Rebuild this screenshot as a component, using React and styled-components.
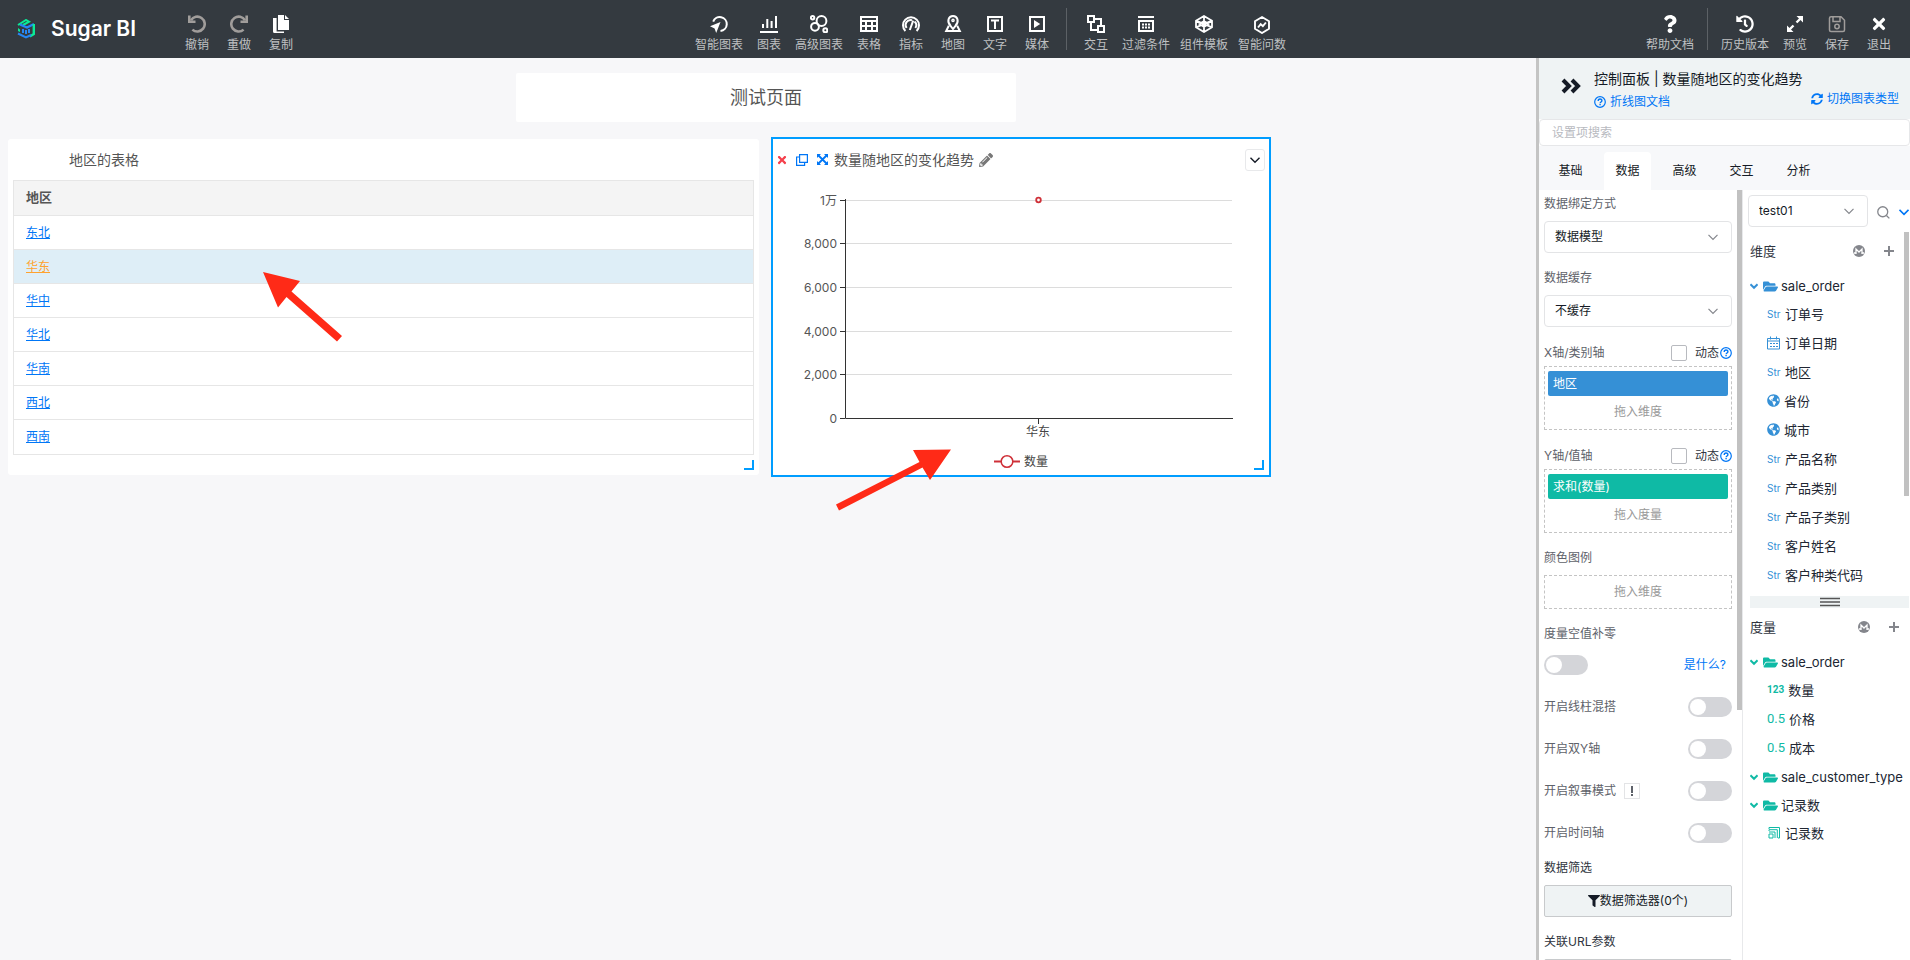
import React from 'react';
import styled, { createGlobalStyle } from 'styled-components';
import { FaQuestion, FaTimes, FaFolderOpen, FaFilter, FaPencilAlt, FaSyncAlt, FaGlobeAmericas, FaHistory } from 'react-icons/fa';

const GlobalStyle = createGlobalStyle`
  *, *::before, *::after { box-sizing: border-box; }
  body { margin: 0; background: #f7f7f9; color: #151b26; font: 12px/20px Inter, "Noto Sans CJK SC", sans-serif; }
  button, input, select { font: inherit; color: inherit; }
  button { cursor: pointer; }
  svg { display: block; flex: none; }
`;

const Page = styled.div`
  display: flex;
  flex-direction: column;
  height: 100vh;
  overflow: hidden;
`;
const Toolbar = styled.header`
  display: flex;
  flex: none;
  height: 58px;
  padding-right: 10px;
  background: #343a40;
`;
const Brand = styled.div`
  display: flex;
  align-items: center;
  gap: 16px;
  width: 176px;
  padding-left: 17px;
  color: #fff;
  font-size: 21px;
  font-weight: 600;
`;
const ToolGroup = styled.nav`
  display: flex;
  margin-left: ${(p) => (p.$push ? 'auto' : '0')};
  padding-right: ${(p) => (p.$gap ? '38px' : '0')};
`;
const ToolButton = styled.button`
  display: flex;
  flex-direction: column;
  align-items: center;
  gap: 3px;
  min-width: 42px;
  padding: 14px 5px 0;
  border: 0;
  background: none;
  color: ${(p) => (p.$dim ? '#a09d9b' : '#fff')};
`;
const ToolIcon = styled.span`
  display: grid;
  place-items: center;
  height: 20px;
`;
const ToolLabel = styled.span`
  color: #bfc0c2;
  font-size: 12px;
  line-height: 16px;
  white-space: nowrap;
`;
const ToolDivider = styled.span`
  width: 1px;
  margin: 8px 8px;
  background: #5c6166;
`;
const Body = styled.div`
  display: flex;
  flex: 1;
  min-height: 0;
`;
const Canvas = styled.main`
  position: relative;
  flex: 1;
  min-width: 0;
  padding: 15px 8px;
`;
const TitleRow = styled.div`
  display: grid;
  grid-template-columns: 508fr 500fr 512fr;
  margin-bottom: 17px;
`;
const PageTitle = styled.h1`
  grid-column: 2;
  margin: 0;
  border-radius: 2px;
  background: #fff;
  color: #555;
  font-size: 18px;
  font-weight: 400;
  line-height: 49px;
  text-align: center;
`;
const WidgetRow = styled.div`
  display: grid;
  grid-template-columns: 751fr 496fr 245fr;
  gap: 14px;
`;
const Widget = styled.section`
  position: relative;
  min-height: 336px;
  border-radius: ${(p) => (p.$selected ? '0' : '3px')};
  background: #fff;
  outline: ${(p) => (p.$selected ? '2px solid #009dff' : 'none')};
`;
const WidgetHead = styled.div`
  display: flex;
  align-items: center;
  height: 41px;
  padding-left: ${(p) => (p.$selected ? '4px' : '61px')};
`;
const WidgetTitle = styled.h2`
  margin: 0 2px 0 0;
  color: #555;
  font-size: 14px;
  font-weight: 400;
`;
const HeadIcon = styled.button`
  display: grid;
  place-items: center;
  width: 20px;
  height: 20px;
  padding: 0;
  border: 0;
  background: none;
  color: ${(p) => p.$color};
`;
const HeadIcons = styled.div`
  display: flex;
  margin: 0 2px 0 -5px;
`;
const MoreButton = styled.button`
  display: grid;
  place-items: center;
  width: 20px;
  height: 22px;
  margin: 0 4px 0 auto;
  padding: 0;
  border: 1px solid #e8e9eb;
  border-radius: 3px;
  background: #fff;
`;
const ResizeHandle = styled.span`
  position: absolute;
  right: 5px;
  bottom: 5px;
  width: 10px;
  height: 10px;
  border: solid #009dff;
  border-width: 0 2px 2px 0;
`;
const DataTable = styled.table`
  width: calc(100% - 10px);
  margin: 0 5px;
  border: 1px solid #e6e6e6;
  border-collapse: collapse;
  text-align: left;
  th, td { padding: 0 12px; border-bottom: 1px solid #e6e6e6; }
  th { height: 35px; padding-bottom: 2px; background: #f4f4f4; color: #555; font-size: 13px; font-weight: 600; }
  td { height: 34px; }
  tr:last-child td { height: 35px; }
`;
const Row = styled.tr`
  background: ${(p) => (p.$active ? '#deeef7' : '#fff')};
`;
const RegionLink = styled.a`
  color: ${(p) => (p.$active ? '#ffa22e' : '#0076f6')};
  text-decoration: underline;
`;
const ChartSvg = styled.svg`
  width: 100%;
  height: auto;
  font-size: 12px;
`;
const Annotations = styled.svg`
  position: absolute;
  top: 0;
  left: 0;
  pointer-events: none;
`;

const Sidebar = styled.aside`
  display: flex;
  flex: none;
  flex-direction: column;
  width: 374px;
  border-left: 3px solid #c4c4c4;
  background: #fff;
  overflow: hidden;
`;
const PanelHead = styled.div`
  display: flex;
  flex: none;
  height: 61px;
  padding: 10px 11px 0 22px;
  background: #eff3f4;
`;
const CollapseButton = styled.button`
  display: block;
  height: 36px;
  padding: 0;
  border: 0;
  background: none;
`;
const PanelTitles = styled.div`
  flex: 1;
  padding-left: 13px;
`;
const PanelTitle = styled.h2`
  margin: 0 0 5px;
  font-size: 14px;
  font-weight: 400;
  line-height: 22px;
  height: 20px;
  white-space: nowrap;
`;
const TitleWrap = styled.div`
  display: flex;
  line-height: 18px;
`;
const TextLink = styled.a`
  display: inline-flex;
  align-items: center;
  gap: 4px;
  color: #0076f6;
  text-decoration: none;
  white-space: nowrap;
`;
const LinkColumn = styled.div`
  display: flex;
  flex-direction: column;
  padding-top: 21px;
`;
const SearchBox = styled.input`
  flex: none;
  height: 27px;
  padding: 0 12px;
  border: 1px solid #e6e7e9;
  border-radius: 4px;
  background: #fff;
  &::placeholder { color: #b8babf; }
`;
const Tabs = styled.div`
  display: flex;
  flex: none;
  gap: 10px;
  height: 44px;
  padding: 6px 9px 0 8px;
  background: #f7f8fa;
`;
const Tab = styled.button`
  width: 47px;
  padding: 0;
  border: 0;
  border-radius: 4px 4px 0 0;
  background: ${(p) => (p.$active ? '#fff' : 'transparent')};
`;
const Columns = styled.div`
  display: flex;
  flex: 1;
  min-height: 0;
`;
const Settings = styled.div`
  width: 198px;
  padding: 4px 5px 0;
  overflow: hidden;
`;
const Rail = styled.div`
  flex: none;
  width: 5px;
  &::before { content: ''; display: block; height: ${(p) => p.$thumb}; background: #c1c1c1; }
`;
const Field = styled.div`
  margin-bottom: 15px;
`;
const FieldLabel = styled.label`
  display: block;
  margin-bottom: 7px;
  color: ${(p) => (p.$strong ? '#303540' : '#5e626a')};
`;
const SelectWrap = styled.div`
  position: relative;
  width: ${(p) => p.$width || '100%'};
  svg { position: absolute; top: 11px; right: 14px; pointer-events: none; }
`;
const Select = styled.select`
  appearance: none;
  display: block;
  width: 100%;
  height: 32px;
  padding: 0 10px;
  border: 1px solid #e3e4e6;
  border-radius: 4px;
  background: #fff;
`;
const AxisHead = styled.div`
  display: flex;
  align-items: center;
  height: 22px;
  margin-bottom: 2px;
  color: #5e626a;
`;
const CheckLabel = styled.label`
  display: flex;
  align-items: center;
  gap: 8px;
  margin-left: auto;
  margin-right: 1px;
  color: #303540;
`;
const Checkbox = styled.input`
  appearance: none;
  width: 16px;
  height: 16px;
  margin: 0;
  border: 1px solid #b8babf;
  border-radius: 2px;
`;
const DropZone = styled.div`
  padding: ${(p) => (p.$filled ? '4px 3px 1px' : '0 3px')};
  border: 1px dashed #c4c4c4;
  color: #999;
  line-height: 32px;
  text-align: center;
`;
const Chip = styled.div`
  height: 25px;
  padding-left: 5px;
  border-radius: 2px;
  background: ${(p) => p.$color};
  color: #fff;
  line-height: 25px;
  text-align: left;
`;
const SwitchRow = styled.div`
  display: flex;
  align-items: center;
  justify-content: space-between;
  height: ${(p) => (p.$compact ? '28px' : '42px')};
  padding-right: ${(p) => (p.$compact ? '6px' : '0')};
  margin-bottom: ${(p) => (p.$compact ? '7px' : '0')};
  color: #5e626a;
`;
const SwitchText = styled.label`
  display: flex;
  align-items: center;
  gap: 8px;
`;
const Switch = styled.input`
  appearance: none;
  width: 44px;
  height: 20px;
  margin: 0;
  padding: 2px;
  border-radius: 10px;
  background: #d4d5d9;
  &::before { content: ''; display: block; width: 16px; height: 16px; border-radius: 50%; background: #fff; }
`;
const SwitchList = styled.div`
  margin-bottom: 4px;
`;
const Notice = styled.span`
  display: grid;
  place-items: center;
  width: 16px;
  height: 16px;
  border: 1px solid #e3e4e6;
`;
const WideButton = styled.button`
  display: flex;
  align-items: center;
  justify-content: center;
  width: 100%;
  height: 32px;
  border: 1px solid #c8cacc;
  border-radius: 2px;
  background: #eff3f4;
`;
const ModelPane = styled.div`
  display: flex;
  flex: 1;
  flex-direction: column;
  min-width: 0;
  padding-right: 1px;
  border-left: 1px solid #e8e9eb;
`;
const ModelBar = styled.div`
  display: flex;
  align-items: center;
  height: 42px;
  padding-left: 5px;
`;
const BarIcon = styled.button`
  display: block;
  margin-left: ${(p) => (p.$wide ? '9px' : '9px')};
  padding: 2px 0 0;
  border: 0;
  background: none;
  color: ${(p) => p.$color};
`;
const Section = styled.section`
  display: flex;
  height: ${(p) => p.$height || 'auto'};
`;
const SectionMain = styled.div`
  flex: 1;
  min-width: 0;
`;
const SectionHead = styled.div`
  display: flex;
  align-items: center;
  gap: 19px;
  height: 40px;
  padding: 0 10px 2px 7px;
  color: #84868c;
`;
const SectionTitle = styled.h3`
  flex: 1;
  margin: 0;
  color: #303540;
  font-size: 13px;
  font-weight: 400;
`;
const IconButton = styled.button`
  padding: 0;
  border: 0;
  background: none;
  color: inherit;
`;
const Tree = styled.ul`
  margin: 0;
  padding: 0;
  list-style: none;
  color: #202632;
  font-size: 13px;
  white-space: nowrap;
`;
const Folder = styled.li`
  display: flex;
  align-items: center;
  height: 28px;
  padding-left: 7px;
  svg { margin-right: 5px; color: ${(p) => p.$color}; }
  svg + svg { margin-right: 3px; }
`;
const Leaf = styled.li`
  display: flex;
  align-items: center;
  gap: 4px;
  height: 29px;
  padding: 0 0 2px 24px;
`;
const TypeTag = styled.span`
  min-width: 14px;
  color: ${(p) => p.$color};
  font-family: ${(p) => p.$face}, sans-serif;
  font-size: ${(p) => p.$size};
  font-weight: ${(p) => (p.$bold ? 700 : 400)};
`;
const TagIcon = styled.span`
  color: ${(p) => p.$color};
`;
const Splitter = styled.div`
  display: grid;
  place-items: center;
  flex: none;
  height: 12px;
  margin-left: 7px;
  background: #eff3f4;
`;

const BLUE = '#3590d6';
const GREEN = '#0fbaa5';

const Line = ({ size = 18, w = 2, color = 'currentColor', children, box = 18 }) => (
  <svg width={size} height={size} viewBox={`0 0 ${box} ${box}`} fill="none" stroke={color} strokeWidth={w}>{children}</svg>
);

const Chevron = ({ size = 10, color = '#84868c', w = 1.2 }) => (
  <svg width={size} height={size} viewBox="0 0 10 10" fill="none" stroke={color} strokeWidth={w}><path d="M.5 2.8 5 7.3 9.5 2.8" /></svg>
);

const HelpMark = () => (
  <svg width="12" height="12" viewBox="0 0 12 12" fill="none" stroke="#0076f6" strokeWidth="1.2">
    <circle cx="6" cy="6" r="5.3" /><path d="M4.2 4.9c0-2.5 3.7-2.5 3.7-.2C7.9 6 6.1 6 6.1 7.3M6.1 8.1v1.2" strokeWidth="1.4" />
  </svg>
);

const icons = {
  undo: <Line w={2.6}><path d="M3 5.2A7.4 7.4 0 1 1 4.4 14.6" /><path d="M1.3.5v6.2h6.2" /></Line>,
  redo: <Line w={2.6}><path d="M15 5.2A7.4 7.4 0 1 0 13.6 14.6" /><path d="M16.7.5v6.2h-6.2" /></Line>,
  copy: <svg width="18" height="20" viewBox="0 0 18 20" fill="currentColor"><path d="M6 1h6v5h5v10H6z" /><path d="M13 1v4h4z" /><path d="M1 4h3.6v13.4H12V19H2.5Q1 19 1 17.5z" /></svg>,
  smart: <Line w={2}><path d="M3.2 6.6A7 7 0 1 1 10.5 16" /><path d="M0 11.3 10.500 7 6.200 18 4.600 13.400z" fill="currentColor" stroke="none" /></Line>,
  bars: <Line w={2}><path d="M0 17h18M3 13V9M7.3 13V4M11.6 13V6M16 13V1" /></Line>,
  bubbles: <Line w={2}><circle cx="11.5" cy="6" r="4.9" /><circle cx="5" cy="11.8" r="3.9" /><circle cx="2.6" cy="2.8" r="1.7" /><circle cx="15.3" cy="15.3" r="2" /></Line>,
  table: <Line w={2}><path d="M1 2h16v14H1zM1 6h16M1 11h16M6 6v10M12 6v10" /></Line>,
  gauge: <Line w={2}><path d="M3.4 16A8 8 0 1 1 14.6 16" /><path d="M4.600 13A5 5 0 0 1 10 5.200M13.400 13A5 5 0 0 0 12.500 6.500M7.800 15l3.400-9.400" /></Line>,
  map: <Line w={2}><path d="M6.5 10.8C2.5 6.5 4.5 1 9 1s6.5 5.5 2.5 9.8L9 14z" /><circle cx="9" cy="5.4" r="1.1" strokeWidth="1.4" /><path d="M4.8 10.8 2.2 16h13.6l-2.6-5.2" /></Line>,
  text: <Line w={2}><path d="M2 2h14v14H2zM5 5.5h8M9 5v9" /></Line>,
  media: <Line w={2}><path d="M2 2h14v14H2z" /><path d="m6 5 6.2 4L6 13z" fill="currentColor" stroke="none" /></Line>,
  interact: <Line w={2}><path d="M1 1h6v6H1zM11 11h6v6h-6zM7 4h7v7M4 7v8h7" /></Line>,
  filter: <Line w={2}><path d="M1 2h16M2 6h14v10H2z" /><path d="M5 9.5h8M5 12.5h8" strokeDasharray="2 1" /></Line>,
  template: <Line w={1.8}><path d="m9 1 8 4.7v6.6L9 17l-8-4.7V5.7zM9 1v5M9 12v5M1 5.7l16 6.6M17 5.7 1 12.3M9 6l4.5 3L9 12 4.5 9z" /></Line>,
  ask: <svg width="18" height="20" viewBox="0 0 18 20" fill="none" stroke="currentColor" strokeWidth="1.9"><path d="m9 3 7 4.2v7.6L9 19l-7-4.2V7.2zM5 13.5l2.7-3.3 2.2 2 3-3.7" /></svg>,
  help: <FaQuestion size={18} />,
  history: <FaHistory size={18} />,
  preview: <Line w={2.4}><path d="m10.5 7.5 5-5M7.5 10.5l-5 5" /><path d="M10.5 1H17v6.5zM1 10.5V17h6.5z" fill="currentColor" stroke="none" /></Line>,
  save: <Line w={1.5}><path d="M3 1.8h10l3.5 3.5v9.6q0 1.5-1.5 1.5H3q-1.5 0-1.5-1.5V3.300Q1.500 1.800 3 1.800zM5 2v4.500h7V2" /><circle cx="9" cy="11.500" r="2.200" /></Line>,
  exit: <FaTimes size={18} />,
};

const Tool = ({ icon, label, dim }) => (
  <ToolButton type="button" $dim={dim}>
    <ToolIcon>{icons[icon]}</ToolIcon>
    <ToolLabel>{label}</ToolLabel>
  </ToolButton>
);

const Logo = () => (
  <svg width="18" height="20" viewBox="0 0 18 20" fill="none">
    <path d="M1 6 9 1l3 1.700-6 3.300" stroke="#0bea97" strokeWidth="2" />
    <path d="m3 5.500 7 3L17 5" stroke="#2686f5" strokeWidth="2.400" />
    <path d="M16.800 5v10l-4 2.500" stroke="#0bea97" strokeWidth="2.400" />
    <path d="m1 9 2 1.500v2.500L1 12z" fill="#0bea97" />
    <path d="M1 14.500 9 18.500l5-2.500M6 10v4M9 11v4M12 10v4" stroke="#2686f5" strokeWidth="2" />
  </svg>
);

const regions = ['东北', '华东', '华中', '华北', '华南', '西北', '西南'];

const TableWidget = () => (
  <Widget>
    <WidgetHead><WidgetTitle>地区的表格</WidgetTitle></WidgetHead>
    <DataTable>
      <thead><tr><th scope="col">地区</th></tr></thead>
      <tbody>
        {regions.map((r) => (
          <Row key={r} $active={r === '华东'}>
            <td><RegionLink href="#region" $active={r === '华东'}>{r}</RegionLink></td>
          </Row>
        ))}
      </tbody>
    </DataTable>
    <ResizeHandle />
  </Widget>
);

const yTicks = [['1万', 20], ['8,000', 63], ['6,000', 107], ['4,000', 151], ['2,000', 194], ['0', 238]];

const LineChart = () => (
  <ChartSvg viewBox="0 0 496 295" role="img" aria-label="数量随地区的变化趋势">
    {yTicks.map(([label, y]) => (
      <g key={label}>
        {label !== '0' && <path d={`M73 ${y + 0.5}H459`} stroke="#dcdcdc" />}
        <path d={`M67 ${y + 0.5}h5`} stroke="#333" />
        <text x="64" y={y + 5} textAnchor="end" fill="#555">{label}</text>
      </g>
    ))}
    <path d="M72.500 19v219.500H460M265.500 239v5" stroke="#333" fill="none" />
    <circle cx="265.500" cy="20" r="2.300" fill="#fff" stroke="#cf3038" strokeWidth="1.800" />
    <text x="265" y="256" textAnchor="middle" fill="#444">华东</text>
    <path d="M221 281.500h26" stroke="#cf3038" strokeWidth="2" />
    <circle cx="234" cy="281.500" r="5.800" fill="#fff" stroke="#cf3038" strokeWidth="1.500" />
    <text x="251" y="286" fill="#444">数量</text>
  </ChartSvg>
);

const ChartWidget = () => (
  <Widget $selected>
    <WidgetHead $selected>
      <HeadIcons>
        <HeadIcon type="button" $color="#f53f4b" aria-label="删除"><FaTimes size={12} /></HeadIcon>
        <HeadIcon type="button" $color="#0076f6" aria-label="复制">
          <Line size={12} box={12} w={1.2}><path d="M3.600.6h7.800v7.800H3.600zM3 3H.6v8.400h8V9" /></Line>
        </HeadIcon>
        <HeadIcon type="button" $color="#0076f6" aria-label="放大">
          <Line size={11} box={11} w={1.8}><path d="m1 1 9 9M10 1l-9 9" /><path d="M0 0h4L0 4zM11 0v4L7 0zM0 11V7l4 4zM11 11H7l4-4z" fill="currentColor" stroke="none" /></Line>
        </HeadIcon>
      </HeadIcons>
      <WidgetTitle>数量随地区的变化趋势</WidgetTitle>
      <HeadIcon type="button" $color="#777" aria-label="编辑标题"><FaPencilAlt size={14} /></HeadIcon>
      <MoreButton type="button" aria-label="更多"><Chevron color="#151b26" w={1.4} /></MoreButton>
    </WidgetHead>
    <LineChart />
    <ResizeHandle />
  </Widget>
);

const SelectField = ({ id, label, value }) => (
  <Field>
    <FieldLabel htmlFor={id}>{label}</FieldLabel>
    <SelectWrap>
      <Select id={id}><option>{value}</option></Select>
      <Chevron />
    </SelectWrap>
  </Field>
);

const AxisField = ({ label, chip, color, hint }) => (
  <Field>
    <AxisHead>
      {label}
      <CheckLabel><Checkbox type="checkbox" />动态</CheckLabel>
      <HelpMark />
    </AxisHead>
    <DropZone $filled>
      <Chip $color={color}>{chip}</Chip>
      {hint}
    </DropZone>
  </Field>
);

const SwitchField = ({ id, label, notice }) => (
  <SwitchRow>
    <SwitchText htmlFor={id}>{label}{notice && <Notice><svg width="2" height="10" viewBox="0 0 2 10" fill="#5e626a"><path d="M0 0h2v7H0zM0 8h2v2H0z" /></svg></Notice>}</SwitchText>
    <Switch id={id} type="checkbox" role="switch" />
  </SwitchRow>
);

const MMark = () => (
  <svg width="12" height="12" viewBox="0 0 12 12"><circle cx="6" cy="6" r="6" fill="currentColor" /><path d="M3 9V4l3 3 3-3v5M1 8h2M9 8h2" fill="none" stroke="#fff" strokeWidth="1.300" /></svg>
);

const PaneHead = ({ title }) => (
  <SectionHead>
    <SectionTitle>{title}</SectionTitle>
    <IconButton type="button" aria-label="管理"><MMark /></IconButton>
    <IconButton type="button" aria-label="新增"><Line size={10} box={10} w={2}><path d="M5 0v10M0 5h10" /></Line></IconButton>
  </SectionHead>
);

const TreeFolder = ({ color, children }) => (
  <Folder $color={color}>
    <Chevron size={8} color="currentColor" w={2.6} />
    <FaFolderOpen size={15} />
    {children}
  </Folder>
);

const typeIcons = {
  str: <TypeTag $color={BLUE} $size="10px" $face="Inter">Str</TypeTag>,
  date: <TagIcon $color={BLUE}><Line size={14} box={14} w={1}><path d="M.5 2.500h12v10.500H.5zM.5 5h12M3.500.5v3M9.500.5v3" /><path d="M3 7.500h8M3 10.500h8" strokeDasharray="2 1" /></Line></TagIcon>,
  geo: <TagIcon $color={BLUE}><FaGlobeAmericas size={13} /></TagIcon>,
  int: <TypeTag $color={GREEN} $size="10px" $face="Roboto" $bold>123</TypeTag>,
  float: <TypeTag $color={GREEN} $size="13px" $face="Roboto">0.5</TypeTag>,
  count: <TagIcon $color={GREEN}><Line size={14} box={14} w={1}><path d="M2 3V1.500h10.500v10.500H11M2 5V3.700h8.300V12M2 6h6v6M2 8h4v4H2z" /></Line></TagIcon>,
};

const TreeLeaf = ({ type, children }) => <Leaf>{typeIcons[type]}<span>{children}</span></Leaf>;

const dimensions = [
  ['str', '订单号'], ['date', '订单日期'], ['str', '地区'], ['geo', '省份'], ['geo', '城市'],
  ['str', '产品名称'], ['str', '产品类别'], ['str', '产品子类别'], ['str', '客户姓名'], ['str', '客户种类代码'],
];

export default function App() {
  return (
    <Page>
      <GlobalStyle />
      <Toolbar>
        <Brand><Logo />Sugar BI</Brand>
        <ToolGroup $gap>
          <Tool icon="undo" label="撤销" dim />
          <Tool icon="redo" label="重做" dim />
          <Tool icon="copy" label="复制" />
        </ToolGroup>
        <ToolGroup $push>
          <Tool icon="smart" label="智能图表" />
          <Tool icon="bars" label="图表" />
          <Tool icon="bubbles" label="高级图表" />
          <Tool icon="table" label="表格" />
          <Tool icon="gauge" label="指标" />
          <Tool icon="map" label="地图" />
          <Tool icon="text" label="文字" />
          <Tool icon="media" label="媒体" />
          <ToolDivider />
          <Tool icon="interact" label="交互" />
          <Tool icon="filter" label="过滤条件" />
          <Tool icon="template" label="组件模板" />
          <Tool icon="ask" label="智能问数" />
        </ToolGroup>
        <ToolGroup $push>
          <Tool icon="help" label="帮助文档" />
          <ToolDivider />
          <Tool icon="history" label="历史版本" />
          <Tool icon="preview" label="预览" />
          <Tool icon="save" label="保存" dim />
          <Tool icon="exit" label="退出" />
        </ToolGroup>
      </Toolbar>
      <Body>
        <Canvas>
          <TitleRow><PageTitle>测试页面</PageTitle></TitleRow>
          <WidgetRow>
            <TableWidget />
            <ChartWidget />
          </WidgetRow>
          <Annotations width="960" height="460" viewBox="0 0 960 460" fill="#ff2a17">
            <path d="m263 214 37 9-8.500 10.500 50.500 44.500-5 5.500-50.500-44.500-8.500 10.500z" />
            <path d="m951 391.500-38 .5 6.500 12-83.500 42.500 3 6 83.500-43 7.500 12.500z" />
          </Annotations>
        </Canvas>
        <Sidebar>
          <PanelHead>
            <CollapseButton type="button" aria-label="收起">
              <Line size={20} box={20} w={4}><path d="m2 4 6 6-6 6M11 4l6 6-6 6" /></Line>
            </CollapseButton>
            <PanelTitles>
              <PanelTitle>控制面板 | 数量随地区的变化趋势</PanelTitle>
              <TitleWrap>
                <TextLink href="#doc"><HelpMark />折线图文档</TextLink>
              </TitleWrap>
            </PanelTitles>
            <LinkColumn><TextLink href="#type"><FaSyncAlt size={12} />切换图表类型</TextLink></LinkColumn>
          </PanelHead>
          <SearchBox type="text" placeholder="设置项搜索" aria-label="设置项搜索" />
          <Tabs>
            {['基础', '数据', '高级', '交互', '分析'].map((t) => (
              <Tab key={t} type="button" $active={t === '数据'}>{t}</Tab>
            ))}
          </Tabs>
          <Columns>
            <Settings>
              <SelectField id="binding" label="数据绑定方式" value="数据模型" />
              <SelectField id="cache" label="数据缓存" value="不缓存" />
              <AxisField label="X轴/类别轴" chip="地区" color={BLUE} hint="拖入维度" />
              <AxisField label="Y轴/值轴" chip="求和(数量)" color={GREEN} hint="拖入度量" />
              <Field>
                <FieldLabel as="div">颜色图例</FieldLabel>
                <DropZone>拖入维度</DropZone>
              </Field>
              <FieldLabel htmlFor="fill-zero">度量空值补零</FieldLabel>
              <SwitchRow $compact>
                <Switch id="fill-zero" type="checkbox" role="switch" />
                <TextLink href="#what">是什么?</TextLink>
              </SwitchRow>
              <SwitchList>
                <SwitchField id="mix" label="开启线柱混搭" />
                <SwitchField id="dual" label="开启双Y轴" />
                <SwitchField id="story" label="开启叙事模式" notice />
                <SwitchField id="timeline" label="开启时间轴" />
              </SwitchList>
              <Field>
                <FieldLabel as="div" $strong>数据筛选</FieldLabel>
                <WideButton type="button"><FaFilter size={12} />数据筛选器(0个)</WideButton>
              </Field>
              <Field>
                <FieldLabel as="div" $strong>关联URL参数</FieldLabel>
                <WideButton type="button" aria-label="关联URL参数" />
              </Field>
            </Settings>
            <Rail $thumb="67.5%" />
            <ModelPane>
              <ModelBar>
                <SelectWrap $width="123px">
                  <Select aria-label="数据模型"><option>test01</option></Select>
                  <Chevron />
                </SelectWrap>
                <BarIcon type="button" aria-label="搜索" $color="#84868c">
                  <Line size={13} box={12} w={1.2}><circle cx="5.300" cy="5.300" r="4.600" /><path d="m8.700 8.700 2.700 2.700" /></Line>
                </BarIcon>
                <BarIcon type="button" aria-label="展开" $color="#0076f6"><Chevron color="currentColor" w={1.6} /></BarIcon>
              </ModelBar>
              <Section $height="364px">
                <SectionMain>
                  <PaneHead title="维度" />
                  <Tree>
                    <TreeFolder color={BLUE}>sale_order</TreeFolder>
                    {dimensions.map(([type, name]) => <TreeLeaf key={name} type={type}>{name}</TreeLeaf>)}
                  </Tree>
                </SectionMain>
                <Rail $thumb="264px" />
              </Section>
              <Splitter>
                <svg width="20" height="10" viewBox="0 0 20 10" stroke="#555" strokeWidth="1.500"><path d="M0 1.500h20M0 5h20M0 8.500h20" /></svg>
              </Splitter>
              <Section>
                <SectionMain>
                  <PaneHead title="度量" />
                  <Tree>
                    <TreeFolder color={GREEN}>sale_order</TreeFolder>
                    <TreeLeaf type="int">数量</TreeLeaf>
                    <TreeLeaf type="float">价格</TreeLeaf>
                    <TreeLeaf type="float">成本</TreeLeaf>
                    <TreeFolder color={GREEN}>sale_customer_type</TreeFolder>
                    <TreeFolder color={GREEN}>记录数</TreeFolder>
                    <TreeLeaf type="count">记录数</TreeLeaf>
                  </Tree>
                </SectionMain>
              </Section>
            </ModelPane>
          </Columns>
        </Sidebar>
      </Body>
    </Page>
  );
}
